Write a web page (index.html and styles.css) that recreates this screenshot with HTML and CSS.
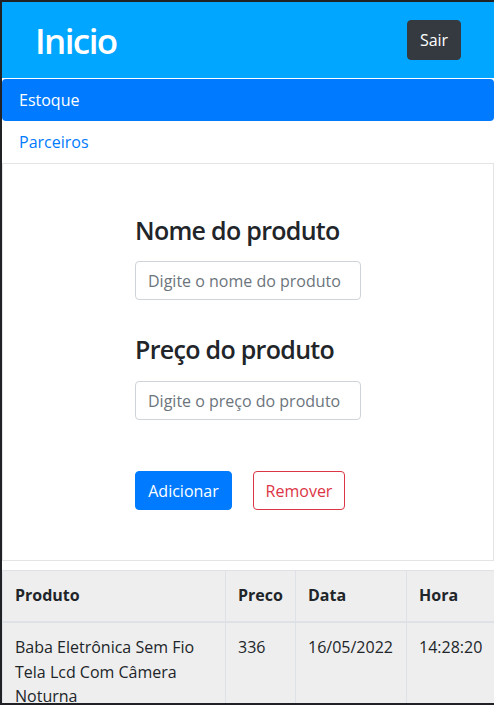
FILE: index.html
```html
<!DOCTYPE html>
<html lang="pt-BR">
<head>
<meta charset="utf-8">
<title>Inicio</title>
<link rel="stylesheet" href="styles.css">
</head>
<body>
<div class="page">
  <header class="topbar">
    <h1 class="title">Inicio</h1>
    <button class="btn btn-dark" type="button">Sair</button>
  </header>
  <nav class="pills">
    <a class="pill active" href="#">Estoque</a>
    <a class="pill" href="#">Parceiros</a>
  </nav>
  <section class="panel">
    <form class="product-form">
      <div class="field">
        <h3 class="field-label">Nome do produto</h3>
        <input class="form-control" type="text" placeholder="Digite o nome do produto">
      </div>
      <div class="field">
        <h3 class="field-label">Preço do produto</h3>
        <input class="form-control" type="text" placeholder="Digite o preço do produto">
      </div>
      <div class="actions">
        <button class="btn btn-primary" type="button">Adicionar</button>
        <button class="btn btn-outline-danger" type="button">Remover</button>
      </div>
    </form>
  </section>
  <table class="stock-table">
    <thead>
      <tr>
        <th class="c-prod">Produto</th>
        <th class="c-preco">Preco</th>
        <th class="c-data">Data</th>
        <th class="c-hora">Hora</th>
      </tr>
    </thead>
    <tbody>
      <tr>
        <td>Baba Eletrônica Sem Fio Tela Lcd Com Câmera Noturna</td>
        <td>336</td>
        <td>16/05/2022</td>
        <td>14:28:20</td>
      </tr>
    </tbody>
  </table>
</div>
</body>
</html>
```
FILE: styles.css
```css
html {
  overflow: hidden;
}
body {
  margin: 0;
  height: 100vh;
  box-sizing: border-box;
  border-style: solid;
  border-color: #202124;
  border-width: 2px 0 2px 2px;
  overflow: hidden;
  background: #fff;
  font-family: "Open Sans", "Noto Sans", sans-serif;
  font-size: 16px;
  line-height: 1.5;
  color: #212529;
}
.page {
  width: 492px;
}
.topbar {
  height: 76px;
  background: #00a6ff;
  display: flex;
  align-items: center;
  justify-content: space-between;
  padding: 0 33px 0 33px;
  box-sizing: border-box;
}
.title {
  margin: 0;
  color: #fff;
  font-size: 35px;
  font-weight: 600;
  letter-spacing: -1.6px;
  line-height: 1.2;
  padding-top: 2px;
}
.btn {
  font-family: inherit;
  font-size: 16px;
  line-height: 24px;
  border-radius: 4px;
  border: 1px solid transparent;
  padding: 6px 12px;
  cursor: pointer;
}
.btn-dark {
  background: #343a40;
  border-color: #343a40;
  color: #fff;
  height: 40px;
  width: 54px;
  padding: 0;
  margin-top: -1px;
}
.pills {
  display: flex;
  flex-direction: column;
  padding-top: 1px;
}
.pill {
  display: block;
  height: 42px;
  box-sizing: border-box;
  padding: 9px 17px;
  color: #007bff;
  text-decoration: none;
  border-radius: 4px;
}
.pill.active {
  background: #007bff;
  color: #fff;
}
.panel {
  border: 1px solid #e2e4e6;
  padding: 51px 0 50px;
  display: flex;
  justify-content: center;
}
.product-form {
  width: 226px;
  display: flex;
  flex-direction: column;
}
.field {
  margin-bottom: 34px;
}
.field + .field {
  margin-bottom: 51px;
}
.field-label {
  margin: 0 0 16px;
  font-size: 25px;
  font-weight: 600;
  letter-spacing: -0.7px;
  line-height: 30px;
  color: #212529;
}
.field + .field .field-label {
  margin-bottom: 17px;
}
.form-control {
  display: block;
  width: 100%;
  height: 39px;
  box-sizing: border-box;
  padding: 0 12px;
  font-family: inherit;
  font-size: 16px;
  color: #495057;
  border: 1px solid #ced4da;
  border-radius: 4px;
  background: #fff;
}
.form-control::placeholder {
  color: #6c757d;
}
.actions {
  display: flex;
  gap: 21px;
}
.btn-primary {
  background: #007bff;
  border-color: #007bff;
  color: #fff;
  height: 39px;
  width: 97px;
  padding: 0;
}
.btn-outline-danger {
  background: #fff;
  border-color: #dc3545;
  color: #dc3545;
  height: 39px;
  width: 92px;
  padding: 0;
}
.stock-table {
  margin-top: 9px;
  border-collapse: collapse;
  table-layout: fixed;
  width: 492px;
  background: #eeeeee;
  line-height: 24.7px;
}
.stock-table th,
.stock-table td {
  border: 1px solid #dee2e6;
  padding: 12px;
  text-align: left;
  vertical-align: top;
}
.stock-table th:last-child,
.stock-table td:last-child {
  border-right: 0;
  padding-right: 0;
  white-space: nowrap;
}
.stock-table th {
  font-weight: 700;
  line-height: 25px;
  border-bottom-width: 2px;
  padding-bottom: 13px;
}
.c-prod { width: 198px; }
.c-preco { width: 45px; }
.c-data { width: 86px; }
```
